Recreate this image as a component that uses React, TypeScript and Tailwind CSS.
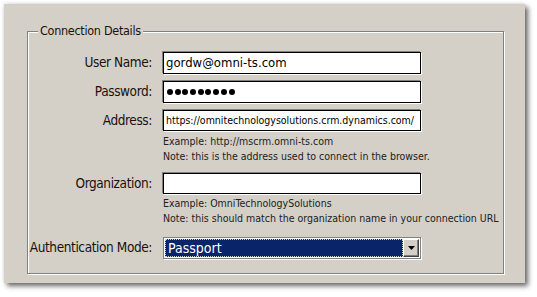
import React from "react";

const UI_FONT = { fontFamily: '"DejaVu Sans Condensed", "DejaVu Sans", Tahoma, sans-serif' };

function Field({ label, children, className = "" }: { label: string; children: React.ReactNode; className?: string }) {
  return (
    <>
      <label className={`text-right text-[13.5px] tracking-[-0.4px] leading-none whitespace-nowrap text-[#1a1010] ${className}`}>
        {label}
      </label>
      <div className={className}>{children}</div>
    </>
  );
}

function TextBox({ children, small, h = "h-[22px]" }: { children?: React.ReactNode; small?: boolean; h?: string }) {
  return (
    <div
      className={`${h} w-[258px] bg-white border border-black shadow-[-1px_-1px_0_#808080,1px_1px_0_#ffffff] flex items-center px-[2px] overflow-hidden whitespace-nowrap ${
        small ? "text-[10.5px]" : "text-[13px]"
      } text-black`}
    >
      {children}
    </div>
  );
}

function Hint({ lines, className = "" }: { lines: string[]; className?: string }) {
  return (
    <>
      <div className={className} />
      <div className={`text-[10.5px] leading-[15px] text-[#202020] whitespace-nowrap ${className}`}>
        {lines.map((l) => (
          <div key={l}>{l}</div>
        ))}
      </div>
    </>
  );
}

export default function App() {
  return (
    <div className="w-[537px] h-[297px] bg-white pt-[4px] pl-[4px]" style={UI_FONT}>
      <div className="w-[521px] h-[279px] bg-[#d4d0c8] shadow-[3px_3px_5px_rgba(0,0,0,0.6),-1px_-1px_3px_rgba(0,0,0,0.08)] pt-[19px] pl-[23px]">
        <fieldset className="w-[477px] border border-[#808080] shadow-[inset_1px_1px_0_#ffffff,1px_1px_0_#ffffff] px-0 pb-[14px] pt-0 m-0">
          <legend className="ml-[10px] px-[2px] text-[12.5px] tracking-[-0.3px] leading-[16px] text-[#1a1010] bg-[#d4d0c8]">
            Connection Details
          </legend>
          <div className="grid grid-cols-[124px_258px] gap-x-[11px] items-center pt-[13px]">
            <Field label="User Name:">
              <TextBox>gordw@omni-ts.com</TextBox>
            </Field>
            <Field label="Password:" className="mt-[7px]">
              <TextBox>
                <div className="flex gap-[1.7px] pl-[1px]">
                  {Array.from({ length: 9 }).map((_, i) => (
                    <span key={i} className="w-[6px] h-[6px] rounded-full bg-black" />
                  ))}
                </div>
              </TextBox>
            </Field>
            <Field label="Address:" className="mt-[7px]">
              <TextBox small h="h-[21px]">
                https://omnitechnologysolutions.crm.dynamics.com/
              </TextBox>
            </Field>
            <Hint
              className="mt-[3px]"
              lines={["Example: http://mscrm.omni-ts.com", "Note: this is the address used to connect in the browser."]}
            />
            <Field label="Organization:" className="mt-[9px]">
              <TextBox h="h-[21px]" />
            </Field>
            <Hint
              className="mt-[2px]"
              lines={[
                "Example: OmniTechnologySolutions",
                "Note: this should match the organization name in your connection URL",
              ]}
            />
            <Field label="Authentication Mode:" className="mt-[11px]">
              <div className="h-[22px] w-[258px] border border-[#808080] shadow-[1px_1px_0_#ffffff] bg-white p-[1px] flex">
                <div className="flex-1 bg-[#0a246a] border border-dotted border-[#d0d0d0] flex items-center pl-[2px] text-[14px] text-white leading-none">
                  Passport
                </div>
                <div className="w-[16px] bg-[#d4d0c8] border border-t-white border-l-white border-r-[#404040] border-b-[#404040] shadow-[inset_-1px_-1px_0_#808080] flex items-center justify-center">
                  <svg width="7" height="4" viewBox="0 0 7 4">
                    <path d="M0 0h7L3.5 4z" fill="#000" />
                  </svg>
                </div>
              </div>
            </Field>
          </div>
        </fieldset>
      </div>
    </div>
  );
}
